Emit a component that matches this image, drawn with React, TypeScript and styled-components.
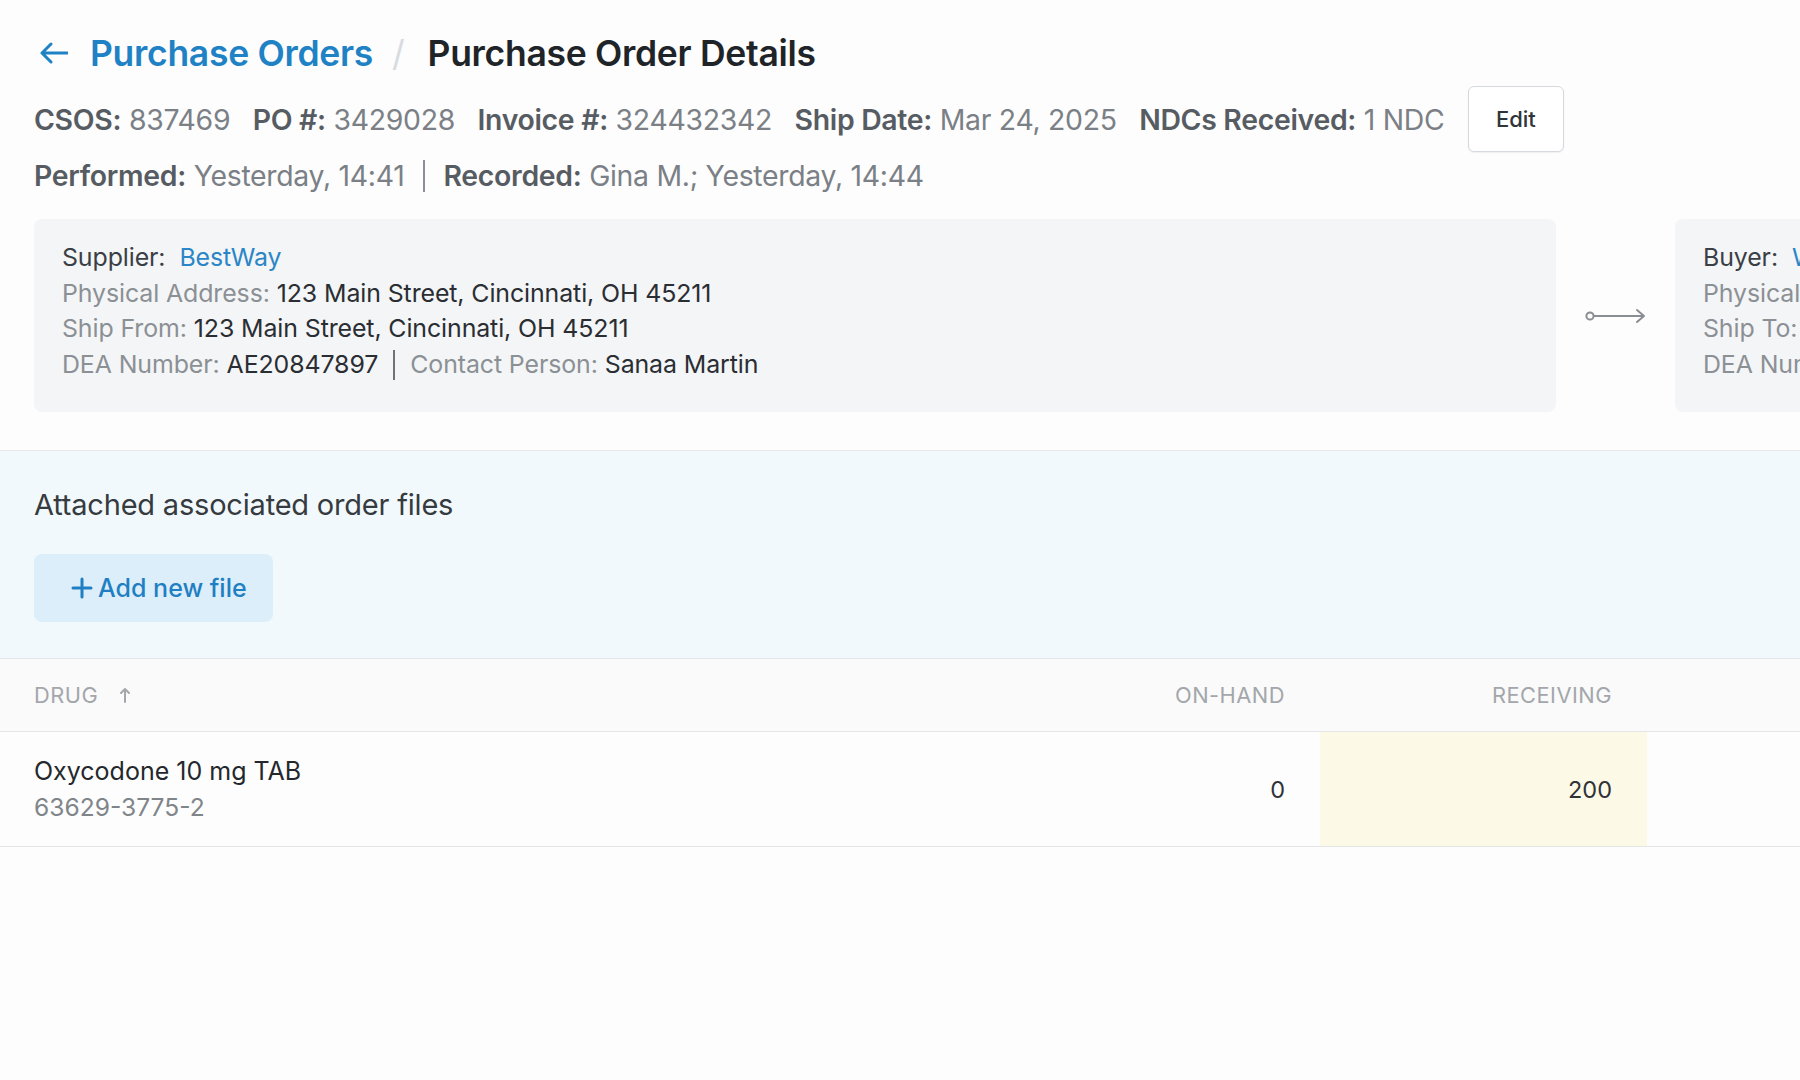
import React from 'react';
import styled, { createGlobalStyle } from 'styled-components';

const GlobalStyle = createGlobalStyle`
  html, body {
    margin: 0;
    padding: 0;
    background: #fdfdfd;
    font-family: Inter, 'Noto Sans', sans-serif;
    color: #2b2f33;
  }
`;

// Page shell, clips the buyer card that runs off the right edge
const Page = styled.div`
  width: 1800px;
  min-height: 1080px;
  overflow: hidden;
  background: #fdfdfd;
`;

const Header = styled.div`
  padding: 30px 34px 0;
`;

const Breadcrumbs = styled.div`
  display: flex;
  align-items: center;
  height: 46px;
  font-size: 35.5px;
  font-weight: 600;
  letter-spacing: -0.3px;
`;

const BackLink = styled.a`
  display: flex;
  align-items: center;
  gap: 22px;
  color: #1f82c4;
  text-decoration: none;
  padding-left: 6px;
`;

const Slash = styled.span`
  color: #d9dcdf;
  font-weight: 400;
  margin: 0 23px 0 19px;
`;

const Current = styled.span`
  color: #1f2429;
`;

const MetaRow = styled.div`
  display: flex;
  align-items: center;
  gap: 22.5px;
  font-size: 28.4px;
  letter-spacing: -0.3px;
  margin-top: ${(p: { $top: number }) => p.$top}px;
`;

const Meta = styled.span`
  color: #7b8086;
  white-space: nowrap;
`;

const MetaLabel = styled.b`
  color: #575c63;
  font-weight: 600;
`;

const VBar = styled.span`
  width: 2px;
  height: 32px;
  background: #8c9096;
  margin: 0 -4px;
`;

const EditButton = styled.button`
  width: 96px;
  height: 66px;
  margin-left: 1px;
  border: 1.5px solid #d6d9dd;
  border-radius: 6px;
  background: #fff;
  font-family: inherit;
  font-size: 22px;
  font-weight: 500;
  color: #30353a;
  box-shadow: 0 1px 2px rgba(0, 0, 0, 0.06);
`;

const Parties = styled.div`
  display: flex;
  align-items: stretch;
  margin-top: 26px;
  padding: 0 34px 38px;
  border-bottom: 1.5px solid #e6e8eb;
`;

const PartyCard = styled.div`
  flex: 0 0 1522px;
  box-sizing: border-box;
  height: 193px;
  background: #f4f5f7;
  border-radius: 8px;
  padding: 21px 28px;
  font-size: 24.9px;
  line-height: 35.6px;
  letter-spacing: -0.1px;
  white-space: nowrap;
  overflow: hidden;
`;

const PartyLine = styled.div`
  display: flex;
  align-items: center;
`;

const PartyTitle = styled.span`
  color: #3a3f45;
  margin-right: 14px;
`;

const PartyLink = styled.span`
  color: #2a86c6;
`;

const Key = styled.span`
  color: #8b9095;
  margin-right: 7px;
`;

const Value = styled.span`
  color: #2a2e33;
`;

const Sep = styled.span`
  width: 2px;
  height: 30px;
  background: #6f7378;
  margin: 0 15px;
`;

const ArrowBox = styled.div`
  flex: 0 0 119px;
  display: flex;
  align-items: center;
  justify-content: center;
`;

const FilesSection = styled.section`
  background: #f2f9fd;
  padding: 38px 34px 36px;
  border-bottom: 1.5px solid #e3e7ea;
`;

const FilesTitle = styled.h2`
  margin: 0;
  font-size: 29px;
  font-weight: 400;
  color: #363b40;
  line-height: 32px;
  letter-spacing: -0.2px;
`;

const AddButton = styled.button`
  margin-top: 33px;
  display: flex;
  align-items: center;
  gap: 5px;
  width: 239px;
  height: 68px;
  padding: 0 0 0 37px;
  border: none;
  border-radius: 8px;
  background: #dceefa;
  color: #1f7fc2;
  font-family: inherit;
  font-size: 25px;
  font-weight: 500;
`;

const TableRow = styled.div<{ $head?: boolean }>`
  display: grid;
  grid-template-columns: 1fr 300px 327px 153px;
  height: ${(p) => (p.$head ? 72 : 114)}px;
  background: ${(p) => (p.$head ? '#fafafa' : '#fdfdfd')};
  border-bottom: 1.5px solid #e4e6e8;
`;

const Cell = styled.div<{ $right?: boolean; $hl?: boolean }>`
  display: flex;
  flex-direction: column;
  justify-content: center;
  align-items: ${(p) => (p.$right ? 'flex-end' : 'flex-start')};
  padding: ${(p) => (p.$right ? '0 35px 0 0' : '0 0 0 34px')};
  background: ${(p) => (p.$hl ? '#fdf9e7' : 'transparent')};
`;

const HeadText = styled.span`
  display: flex;
  align-items: center;
  gap: 21px;
  font-size: 21.8px;
  color: #a3a7ab;
  letter-spacing: 0.5px;
  text-transform: uppercase;
`;

const DrugName = styled.div`
  font-size: 25px;
  color: #24282d;
  line-height: 36px;
`;

const Ndc = styled.div`
  font-size: 24.6px;
  color: #80858a;
  line-height: 36px;
`;

const Num = styled.span`
  font-size: 23.5px;
  color: #2f3338;
`;

const BackArrow = () => (
  <svg width="28" height="22" viewBox="0 0 28 22" fill="none">
    <path d="M27 11H2M11 2L2 11l9 9" stroke="#1f82c4" strokeWidth="3" strokeLinecap="round" strokeLinejoin="round" />
  </svg>
);

const FlowArrow = () => (
  <svg width="62" height="16" viewBox="0 0 62 16" fill="none">
    <circle cx="5" cy="8" r="3.6" stroke="#8a8e93" strokeWidth="2" />
    <path d="M9 8h50M52 2l7 6-7 6" stroke="#8a8e93" strokeWidth="2" strokeLinecap="round" strokeLinejoin="round" />
  </svg>
);

const SortUp = () => (
  <svg width="12" height="16" viewBox="0 0 12 16" fill="none">
    <path d="M6 15V2M2 6l4-4 4 4" stroke="#a3a7ab" strokeWidth="2" strokeLinecap="round" strokeLinejoin="round" />
  </svg>
);

const Plus = () => (
  <svg width="22" height="22" viewBox="0 0 22 22" fill="none">
    <path d="M11 2v18M2 11h18" stroke="#1f7fc2" strokeWidth="3" strokeLinecap="round" />
  </svg>
);

const App: React.FC = () => (
  <Page>
    <GlobalStyle />
    {/* ============ title + meta ============ */}
    <Header>
      <Breadcrumbs>
        <BackLink href="#">
          <BackArrow />
          Purchase Orders
        </BackLink>
        <Slash>/</Slash>
        <Current>Purchase Order Details</Current>
      </Breadcrumbs>

      <MetaRow $top={10}>
        <Meta><MetaLabel>CSOS:</MetaLabel> 837469</Meta>
        <Meta><MetaLabel>PO #:</MetaLabel> 3429028</Meta>
        <Meta><MetaLabel>Invoice #:</MetaLabel> 324432342</Meta>
        <Meta><MetaLabel>Ship Date:</MetaLabel> Mar 24, 2025</Meta>
        <Meta><MetaLabel>NDCs Received:</MetaLabel> 1 NDC</Meta>
        <EditButton>Edit</EditButton>
      </MetaRow>

      <MetaRow $top={6}>
        <Meta><MetaLabel>Performed:</MetaLabel> Yesterday, 14:41</Meta>
        <VBar />
        <Meta><MetaLabel>Recorded:</MetaLabel> Gina M.; Yesterday, 14:44</Meta>
      </MetaRow>
    </Header>

    {/* ============ supplier -> buyer ============ */}
    <Parties>
      <PartyCard>
        <PartyLine>
          <PartyTitle>Supplier:</PartyTitle>
          <PartyLink>BestWay</PartyLink>
        </PartyLine>
        <PartyLine>
          <Key>Physical Address:</Key>
          <Value>123 Main Street, Cincinnati, OH 45211</Value>
        </PartyLine>
        <PartyLine>
          <Key>Ship From:</Key>
          <Value>123 Main Street, Cincinnati, OH 45211</Value>
        </PartyLine>
        <PartyLine>
          <Key>DEA Number:</Key>
          <Value>AE20847897</Value>
          <Sep />
          <Key>Contact Person:</Key>
          <Value>Sanaa Martin</Value>
        </PartyLine>
      </PartyCard>
      <ArrowBox>
        <FlowArrow />
      </ArrowBox>
      <PartyCard>
        <PartyLine>
          <PartyTitle>Buyer:</PartyTitle>
          <PartyLink>Westside Pharmacy</PartyLink>
        </PartyLine>
        <PartyLine>
          <Key>Physical Address:</Key>
          <Value>450 Elm Avenue, Cincinnati, OH 45202</Value>
        </PartyLine>
        <PartyLine>
          <Key>Ship To:</Key>
          <Value>450 Elm Avenue, Cincinnati, OH 45202</Value>
        </PartyLine>
        <PartyLine>
          <Key>DEA Number:</Key>
          <Value>BW1234563</Value>
        </PartyLine>
      </PartyCard>
    </Parties>

    {/* ============ files ============ */}
    <FilesSection>
      <FilesTitle>Attached associated order files</FilesTitle>
      <AddButton>
        <Plus />
        Add new file
      </AddButton>
    </FilesSection>

    {/* ============ drugs table ============ */}
    <TableRow $head>
      <Cell>
        <HeadText>Drug <SortUp /></HeadText>
      </Cell>
      <Cell $right>
        <HeadText>On-hand</HeadText>
      </Cell>
      <Cell $right>
        <HeadText>Receiving</HeadText>
      </Cell>
      <Cell />
    </TableRow>
    <TableRow>
      <Cell>
        <DrugName>Oxycodone 10 mg TAB</DrugName>
        <Ndc>63629-3775-2</Ndc>
      </Cell>
      <Cell $right>
        <Num>0</Num>
      </Cell>
      <Cell $right $hl>
        <Num>200</Num>
      </Cell>
      <Cell />
    </TableRow>
  </Page>
);

export default App;
